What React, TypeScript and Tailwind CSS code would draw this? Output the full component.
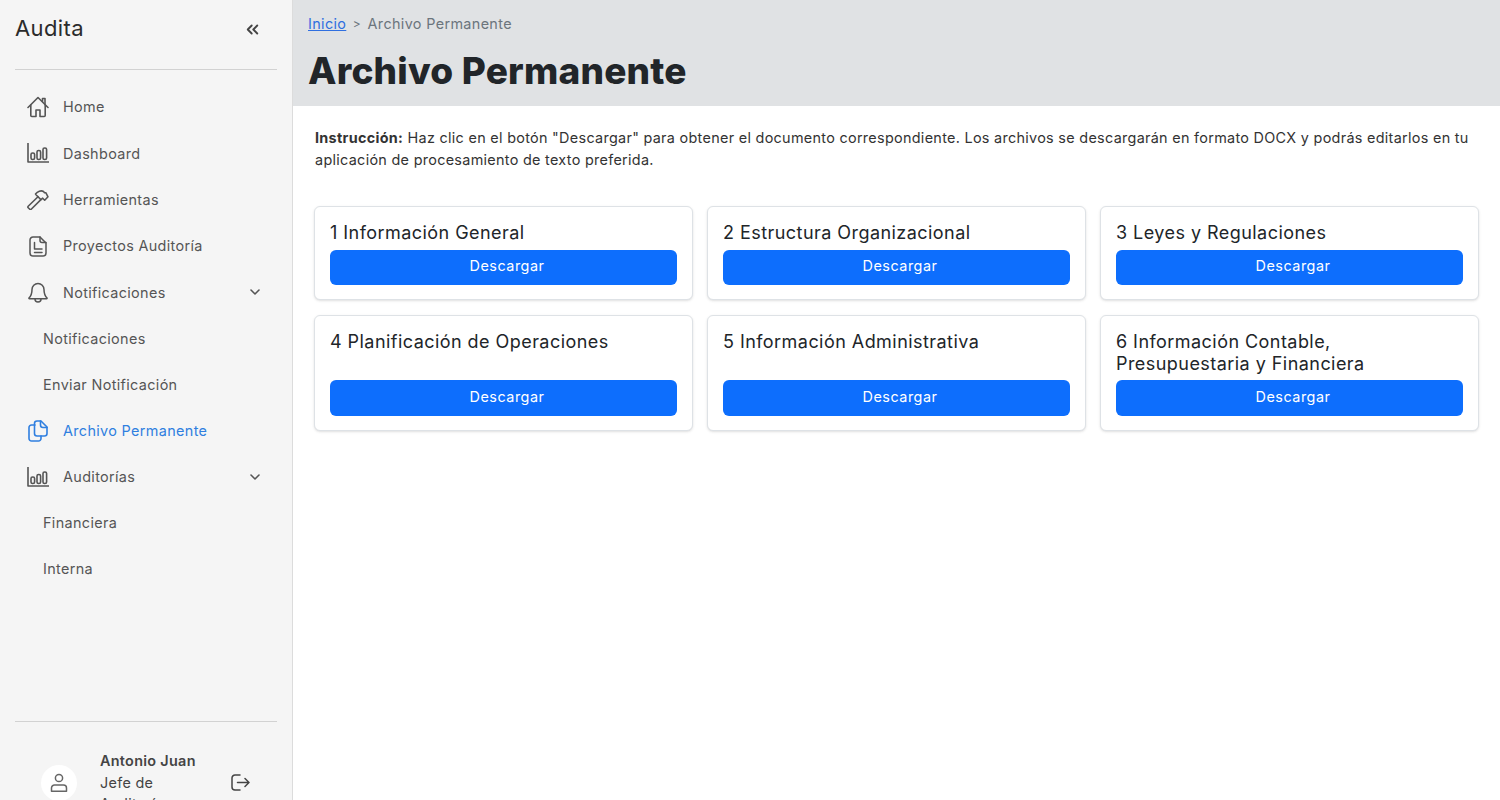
import { LuChevronDown, LuChevronsLeft } from "react-icons/lu";

function HomeIcon() {
    return (
        <svg width="22" height="22" viewBox="0 0 22 22" fill="none" stroke="currentColor" strokeWidth="1.600" strokeLinejoin="round" strokeLinecap="round">
            <path d="M1 11.500L11 1.500l10 10" />
            <path d="M15.500 5.500V2.500h2.500v6" />
            <path d="M3.800 9v10.500a1 1 0 0 0 1 1H9v-6.500h4v6.500h4.200a1 1 0 0 0 1-1V9" />
        </svg>
    );
}

function ChartIcon() {
    return (
        <svg width="22" height="20" viewBox="0 0 22 20" fill="none" stroke="currentColor" strokeWidth="1.600" strokeLinejoin="round">
            <path d="M1 0v19h21" />
            <rect x="4" y="10" width="3.600" height="6.500" rx="1.600" />
            <rect x="10" y="7.500" width="3.600" height="9" rx="1.600" />
            <rect x="16" y="5" width="3.600" height="11.500" rx="1.600" />
        </svg>
    );
}

function HammerIcon() {
    return (
        <svg width="22" height="21" viewBox="0 0 22 21" fill="none" stroke="currentColor" strokeWidth="1.600" strokeLinejoin="round" strokeLinecap="round">
            <path d="M1.200 17.300L11 7.700l2.900 2.900-9.700 9.700a1 1 0 0 1-1.400 0l-1.600-1.600a1 1 0 0 1 0-1.400z" />
            <path d="M11 7.700L9.500 6.200 8.500 5C10.500 2.500 14 1 16.500 2.500l1 1.200h1.300L21 7.800l-3.300 3.400-2-2-1.800 1.400" />
        </svg>
    );
}

function DocIcon() {
    return (
        <svg width="18" height="21" viewBox="0 0 18 21" fill="none" stroke="currentColor" strokeWidth="1.500" strokeLinejoin="round" strokeLinecap="round">
            <path d="M4 1h7l6 6v10a3 3 0 0 1-3 3H4a3 3 0 0 1-3-3V4a3 3 0 0 1 3-3z" />
            <path d="M11 1v3.500a2 2 0 0 0 2 2h4" />
            <path d="M5.500 6.500v6.500h7.500" />
            <path d="M5.500 16.500h7.500" />
        </svg>
    );
}

function BellIcon() {
    return (
        <svg width="20" height="21" viewBox="0 0 20 21" fill="none" stroke="currentColor" strokeWidth="1.500" strokeLinejoin="round" strokeLinecap="round">
            <path d="M10 1.500a6 6 0 0 0-6 6c0 4-1 6.500-3 8.500a.5.5 0 0 0 .4.8h17.200a.5.5 0 0 0 .4-.8c-2-2-3-4.500-3-8.500a6 6 0 0 0-6-6z" />
            <path d="M7 17a3 3 0 0 0 6 0" />
        </svg>
    );
}

function CopyIcon() {
    return (
        <svg width="20" height="22" viewBox="0 0 20 22" fill="none" stroke="currentColor" strokeWidth="1.600" strokeLinejoin="round" strokeLinecap="round">
            <path d="M7 5H3.500A2.500 2.500 0 0 0 1 7.500V18.500A2.500 2.500 0 0 0 3.500 21h7a2.500 2.500 0 0 0 2.500-2.500V16" />
            <path d="M9 1h4l6 6v6.500a2.500 2.500 0 0 1-2.500 2.500H9a2.500 2.500 0 0 1-2.500-2.500V3.500A2.500 2.500 0 0 1 9 1z" />
            <path d="M12.500 1v4a2.500 2.500 0 0 0 2.500 2.500h4" />
        </svg>
    );
}

function UserIcon() {
    return (
        <svg width="18" height="20" viewBox="0 0 18 20" fill="none" stroke="currentColor" strokeWidth="1.500">
            <circle cx="9" cy="5" r="3.600" />
            <path d="M4.500 12h9A3 3 0 0 1 16.500 15v3.200H1.500V15A3 3 0 0 1 4.500 12z" strokeLinejoin="round" />
        </svg>
    );
}

function LogoutIcon() {
    return (
        <svg width="19" height="17" viewBox="0 0 19 17" fill="none" stroke="currentColor" strokeWidth="1.500" strokeLinecap="round" strokeLinejoin="round">
            <path d="M9 1H4a3 3 0 0 0-3 3v9a3 3 0 0 0 3 3h5" />
            <path d="M6.500 8.500H18M14 4.500l4 4-4 4" />
        </svg>
    );
}

function NavItem({ icon, label, caret, active }: { icon: React.ReactNode; label: string; caret?: boolean; active?: boolean }) {
    return (
        <div className={active ? "flex h-[46.3px] items-center pl-[27px] pr-[29px] text-[#2f7fe0]" : "flex h-[46.3px] items-center pl-[27px] pr-[29px] text-[#555555]"}>
            <span className="flex w-[22px] justify-center">{icon}</span>
            <span className="ml-[14px] flex-1 text-[14.4px] tracking-[0.35px]">{label}</span>
            {caret && <LuChevronDown size={16} strokeWidth={2.4} />}
        </div>
    );
}

function SubItem({ label }: { label: string }) {
    return <div className="flex h-[46px] items-center pl-[43px] text-[14.4px] tracking-[0.35px] text-[#555555]">{label}</div>;
}

function DocCard({ title }: { title: string }) {
    return (
        <div className="flex flex-col gap-[6px] rounded-md border border-[#dee2e6] bg-white px-[15px] pb-[14px] pt-[15px] shadow-sm">
            <div className="flex-1 text-[18px] leading-[21.6px] tracking-[0.45px] text-[#212529]">{title}</div>
            <button className="h-[35.7px] rounded-md bg-[#0d6efd] pb-[3px] pl-[7px] text-[14.4px] tracking-[0.5px] text-white">Descargar</button>
        </div>
    );
}

const cards = [
    "1 Información General",
    "2 Estructura Organizacional",
    "3 Leyes y Regulaciones",
    "4 Planificación de Operaciones",
    "5 Información Administrativa",
    "6 Información Contable, Presupuestaria y Financiera",
];

export default function App() {
    return (
        <div className="flex h-screen overflow-hidden bg-white font-['Inter',sans-serif]">
            {/* Sidebar */}
            <aside className="flex h-full w-[293px] shrink-0 flex-col border-r border-[#dcdcdc] bg-[#f5f5f5]">
                <div className="mx-[15px] flex h-[70px] items-start justify-between border-b border-[#d2d2d2] pt-[14px]">
                    <span className="text-[22px] leading-[29px] tracking-[0.4px] text-[#2b2b2b]">Audita</span>
                    <LuChevronsLeft size={19} strokeWidth={2.4} className="mr-[15px] mt-[6px] text-[#444444]" />
                </div>
                <nav className="mt-[14px] flex-1">
                    <NavItem icon={<HomeIcon />} label="Home" />
                    <NavItem icon={<ChartIcon />} label="Dashboard" />
                    <NavItem icon={<HammerIcon />} label="Herramientas" />
                    <NavItem icon={<DocIcon />} label="Proyectos Auditoría" />
                    <NavItem icon={<BellIcon />} label="Notificaciones" caret />
                    <SubItem label="Notificaciones" />
                    <SubItem label="Enviar Notificación" />
                    <NavItem icon={<CopyIcon />} label="Archivo Permanente" active />
                    <NavItem icon={<ChartIcon />} label="Auditorías" caret />
                    <SubItem label="Financiera" />
                    <SubItem label="Interna" />
                </nav>
                <div className="mx-[15px] flex h-[79px] shrink-0 items-start border-t border-[#d2d2d2] pt-[28px]">
                    <div className="ml-[26px] mt-[15px] flex size-[36px] shrink-0 items-center justify-center rounded-full bg-white text-[#666666]">
                        <UserIcon />
                    </div>
                    <div className="ml-[23px] w-[104px] text-[14.4px] leading-[21.5px] tracking-[0.3px] text-[#444444]">
                        <div className="font-semibold">Antonio Juan</div>
                        <div>Jefe de Auditoría</div>
                    </div>
                    <span className="ml-auto mr-[27px] mt-[24px] text-[#444444]"><LogoutIcon /></span>
                </div>
            </aside>

            {/* Main */}
            <main className="flex-1">
                <header className="h-[106px] bg-[#e0e2e4] px-[15px] pt-[13px]">
                    <div className="flex items-center text-[14.4px] leading-[21px] tracking-[0.35px] text-[#6c757d]">
                        <a className="text-[#2f6fe0] underline">Inicio</a>
                        <span className="mx-[6.5px] text-[12px]">&gt;</span>
                        <span>Archivo Permanente</span>
                    </div>
                    <h1 className="mt-[15px] text-[37px] font-extrabold leading-[44px] tracking-[0.2px] text-[#212529]">Archivo Permanente</h1>
                </header>
                <section className="px-[21px] pt-[21px]">
                    <p className="pl-[1px] text-[14.4px] leading-[21.6px] tracking-[0.3px] text-[#333333]">
                        <strong>Instrucción:</strong> Haz clic en el botón "Descargar" para obtener el documento correspondiente. Los archivos se descargarán en formato DOCX y podrás editarlos en tu aplicación de procesamiento de texto preferida.
                    </p>
                    <div className="mt-[36px] grid grid-cols-3 gap-x-[14px] gap-y-[14.500px]">
                        {cards.map((c) => (
                            <DocCard key={c} title={c} />
                        ))}
                    </div>
                </section>
            </main>
        </div>
    );
}
